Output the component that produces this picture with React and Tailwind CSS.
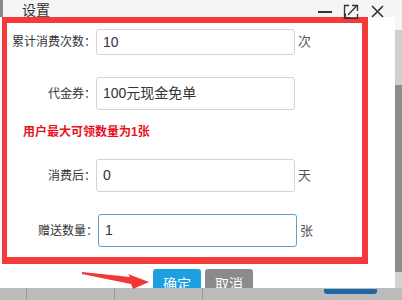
import React from "react";

const rows = [
  { label: "累计消费次数：", value: "10", unit: "次", h: "h-[26px]", mt: "mt-[6px]" },
  { label: "代金券：", value: "100元现金免单", unit: "", h: "h-[33px]", mt: "mt-[22px]" },
];

const rows2 = [
  { label: "消费后：", value: "0", unit: "天", mt: "mt-[19px]", focus: false },
  { label: "赠送数量：", value: "1", unit: "张", mt: "mt-[22px]", focus: true },
];

function Field({ label, value, unit, h = "h-[33px]", mt, focus }) {
  return (
    <div className={`flex items-center ${mt}`}>
      <div
        className={`${focus ? "w-[91px]" : "w-[89px]"} shrink-0 text-right text-[12px] text-[#333]`}
      >
        {label}
      </div>
      <div
        className={`${h} w-[199px] shrink-0 flex items-center rounded-[3px] border pl-[6px] text-[14px] text-[#333] ${
          focus ? "border-[#5b9fd3]" : "border-[#d4d4d4]"
        }`}
      >
        {value}
      </div>
      {unit && <span className="ml-[3px] text-[13px] text-[#555]">{unit}</span>}
    </div>
  );
}

function WinControls() {
  return (
    <div className="ml-auto flex items-start pr-[11px] relative z-10 text-[#333]">
      <svg width="14" height="17" className="mt-[0px]" aria-hidden="true">
        <path d="M0 12h14" stroke="currentColor" strokeWidth="2" />
      </svg>
      <svg width="16" height="15" className="ml-[11px] mt-[4px]" aria-hidden="true" fill="none" stroke="currentColor" strokeWidth="1.3">
        <path d="M6 1.5H1.5v13h13V10" />
        <path d="M5 11l9-9.5" />
        <path d="M9 1.5h5.5V7" />
        <path d="M2.5 9.5v4h4" strokeWidth="1" />
      </svg>
      <svg width="13" height="13" className="ml-[12px] mt-[5px]" aria-hidden="true" stroke="currentColor" strokeWidth="1.6">
        <path d="M1 1l11 11M12 1L1 12" />
      </svg>
    </div>
  );
}

export default function App() {
  return (
    <div className="relative w-[402px] h-[300px] overflow-hidden bg-white font-['Liberation_Sans','Noto_Sans_CJK_SC',sans-serif]">
      <div className="flex h-[288px]">
        <div className="w-[395px] flex flex-col">
          <div className="h-[17px] flex bg-[#f5f5f5] border-l-[3px] border-[#8a8a8a]">
            <span className="pl-[19px] pt-[1px] text-[14px] leading-[18px] text-[#333]">设置</span>
            <WinControls />
          </div>

          <div className="ml-[2px] w-[366px] h-[247px] border-t-[6px] border-l-[5px] border-r-[6px] border-b-[7px] border-[#f43a3a] flex flex-col">
            {rows.map((r) => (
              <Field key={r.label} {...r} />
            ))}
            <p className="mt-[14px] pl-[16px] text-[12px] leading-[16px] font-bold text-[#e8101e]">
              用户最大可领数量为1张
            </p>
            {rows2.map((r) => (
              <Field key={r.label} {...r} />
            ))}
          </div>

          <div className="h-[24px] overflow-hidden flex gap-[4px] pl-[153px]">
            <button className="mt-[5px] h-[30px] w-[48px] shrink-0 rounded-t-[3px] bg-[#1da0e2] text-[14px] text-white">
              确定
            </button>
            <button className="mt-[5px] h-[30px] w-[48px] shrink-0 rounded-t-[3px] bg-[#8b8b8b] text-[14px] text-white">
              取消
            </button>
          </div>
        </div>

        <div className="w-[7px] flex flex-col">
          <div className="h-[30px] bg-[#f5f5f5]" />
          <div className="h-[55px] bg-[#cfcfcf]" />
          <div className="h-[187px] bg-[#8c8c8c]" />
          <div className="flex-1 bg-[#d2d2d2]" />
        </div>
      </div>

      <div className="h-[12px] flex bg-[#bcbcbc]">
        <div className="w-[27px] border-r border-[#9a9a9a]" />
        <div className="w-[88px] border-r border-[#9a9a9a]" />
        <div className="w-[88px] border-r border-[#9a9a9a]" />
        <div className="ml-[121px] w-[53px] h-[5px] mt-[1px] rounded-b-[3px] bg-[#1c67a2]" />
      </div>

      <svg
        className="absolute left-[80px] top-[270px]"
        width="72"
        height="22"
        viewBox="0 0 72 22"
        aria-hidden="true"
      >
        <polygon points="2,2 50,7 48,4 69,12 53,19 51,14 2,4" fill="#f23535" />
      </svg>
    </div>
  );
}
